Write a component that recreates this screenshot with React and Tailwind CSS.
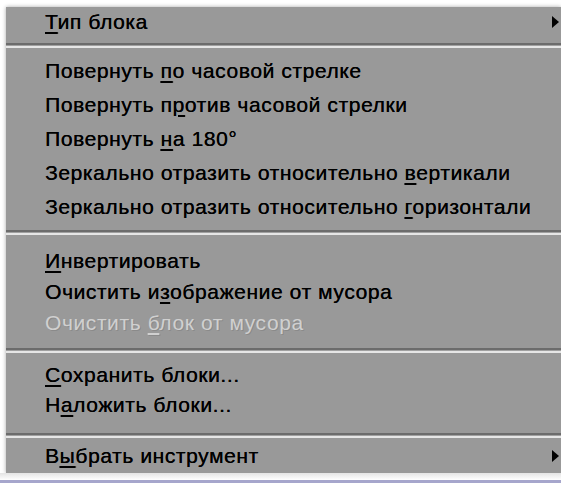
import React from "react";

const font = { fontFamily: '"Liberation Sans", Arial, sans-serif' };

function U({ children }) {
  return (
    <span className="underline decoration-[2px] underline-offset-[3px]">{children}</span>
  );
}

function Arrow() {
  return (
    <svg width="7" height="12" viewBox="0 0 7 12" className="shrink-0">
      <path d="M0 0 L7 6 L0 12 Z" fill="#000" />
    </svg>
  );
}

function Row({ h, children, arrow, disabled }) {
  return (
    <div
      className={`flex items-center justify-between pl-[39px] pr-[2px] text-[21px] tracking-[0.6px] whitespace-nowrap ${
        disabled
          ? "text-[#d0d0d0] [text-shadow:1px_1px_0_rgba(110,110,110,0.35)]"
          : "text-black [text-shadow:0.2px_0_0_#000]"
      } ${h}`}
    >
      <span>{children}</span>
      {arrow && <Arrow />}
    </div>
  );
}

function Sep({ mt }) {
  return (
    <div className={`flex flex-col ${mt}`}>
      <div className="h-[2px] bg-[#6c6c6c]" />
      <div className="h-[1px] bg-[#a0a0a0]" />
      <div className="h-[2px] bg-[#e6e6e6]" />
    </div>
  );
}

export default function App() {
  return (
    <div className="w-[561px] h-[483px] bg-white flex flex-col overflow-hidden" style={font}>
      <div className="pt-[7px] pl-[6px]">
        <div className="h-[466px] bg-[#999999] shadow-[0_0_4px_rgba(0,0,0,0.35)] flex flex-col">
          <Row h="h-[29px] leading-[29px]" arrow>
            <U>Т</U>ип блока
          </Row>
          <Sep mt="mt-[7px]" />
          <div className="flex flex-col mt-[6px]">
            <Row h="h-[34px] leading-[34px]">
              Повернуть <U>п</U>о часовой стрелке
            </Row>
            <Row h="h-[34px] leading-[34px]">
              Повернуть п<U>р</U>отив часовой стрелки
            </Row>
            <Row h="h-[34px] leading-[34px]">
              Повернуть <U>н</U>а 180°
            </Row>
            <Row h="h-[34px] leading-[34px]">
              Зеркально отразить относительно <U>в</U>ертикали
            </Row>
            <Row h="h-[34px] leading-[34px]">
              Зеркально отразить относительно <U>г</U>оризонтали
            </Row>
          </div>
          <Sep mt="mt-[6px]" />
          <div className="flex flex-col mt-[10px]">
            <Row h="h-[31px] leading-[31px]">
              <U>И</U>нвертировать
            </Row>
            <Row h="h-[31px] leading-[31px]">
              Очистить и<U>з</U>ображение от мусора
            </Row>
            <Row h="h-[31px] leading-[31px]" disabled>
              Очистить <U>б</U>лок от мусора
            </Row>
          </div>
          <Sep mt="mt-[10px]" />
          <div className="flex flex-col mt-[7px]">
            <Row h="h-[30px] leading-[30px]">
              <U>С</U>охранить блоки...
            </Row>
            <Row h="h-[30px] leading-[30px]">
              Н<U>а</U>ложить блоки...
            </Row>
          </div>
          <Sep mt="mt-[13px]" />
          <div className="flex flex-col mt-[3px]">
            <Row h="h-[30px] leading-[30px]" arrow>
              В<U>ы</U>брать инструмент
            </Row>
          </div>
        </div>
      </div>
      <div className="h-[7px] bg-gradient-to-b from-[#e4e4e4] to-white" />
      <div className="h-[3px] bg-[#a6a6cc]" />
    </div>
  );
}
